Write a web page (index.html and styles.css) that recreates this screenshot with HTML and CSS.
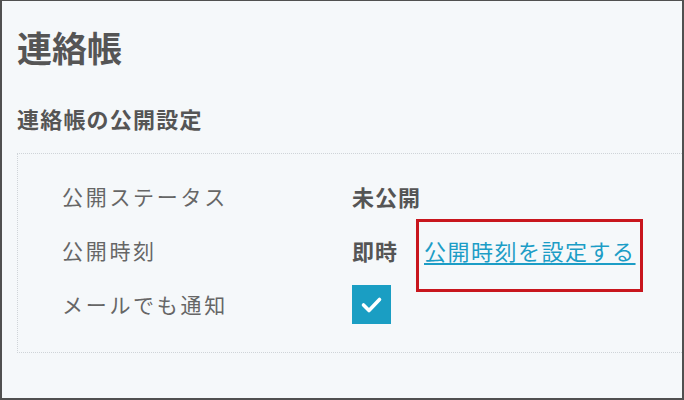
FILE: index.html
```html
<!DOCTYPE html>
<html lang="ja">
<head>
  <meta charset="UTF-8">
  <meta name="viewport" content="width=device-width, initial-scale=1.0">
  <title>連絡帳</title>
  <link rel="stylesheet" href="styles.css">
</head>
<body>
  <div class="frame">
    <h1 class="page-title">連絡帳</h1>
    <h2 class="section-title">連絡帳の公開設定</h2>
    <div class="settings-panel">
      <div class="setting-row">
        <div class="setting-label">公開ステータス</div>
        <div class="setting-value">未公開</div>
      </div>
      <div class="setting-row">
        <div class="setting-label">公開時刻</div>
        <div class="setting-value">
          即時
          <a href="#" class="time-link">公開時刻を設定する</a>
        </div>
      </div>
      <div class="setting-row">
        <div class="setting-label">メールでも通知</div>
        <div class="setting-value">
          <span class="checkbox">
            <svg viewBox="0 0 39 39" width="39" height="39">
              <polyline points="11.5,20 17,25.5 27.5,14.5" fill="none" stroke="#fff" stroke-width="3.6" stroke-linecap="round" stroke-linejoin="round"/>
            </svg>
          </span>
        </div>
      </div>
    </div>
  </div>
</body>
</html>
```

FILE: styles.css
```css
html, body {
  margin: 0;
  padding: 0;
}
body {
  font-family: "Noto Sans CJK JP", "Noto Sans", sans-serif;
  background: #f5f8fa;
}
.frame {
  box-sizing: border-box;
  width: 684px;
  height: 400px;
  border: 2px solid #505050;
  border-top-width: 1px;
  background: #f5f8fa;
  padding: 0 0 0 15px;
  overflow: hidden;
}
.page-title {
  margin: 26px 0 0;
  font-size: 35px;
  line-height: 40px;
  font-weight: bold;
  color: #555;
}
.section-title {
  margin: 36px 0 0;
  font-size: 22px;
  line-height: 30px;
  letter-spacing: 1.2px;
  font-weight: bold;
  color: #555;
}
.settings-panel {
  margin: 20px -40px 0 0;
  border: 1px dotted #cfd4d8;
  padding: 15px 0 21px 44px;
}
.setting-row {
  display: grid;
  grid-template-columns: 290px auto;
  align-items: center;
  height: 54px;
}
.setting-label {
  font-size: 21px;
  letter-spacing: 2.7px;
  color: #666;
}
.setting-value {
  display: flex;
  align-items: center;
  font-size: 22px;
  font-weight: bold;
  color: #555;
  letter-spacing: 1px;
}
.time-link {
  position: relative;
  margin-left: 26px;
  font-weight: normal;
  letter-spacing: 1.5px;
  color: #1c9dc6;
  text-decoration: underline;
  text-underline-offset: 3px;
}
.time-link::after {
  content: "";
  position: absolute;
  left: -8px;
  right: -7px;
  top: -15px;
  bottom: -26px;
  border: 3px solid #c8161d;
}
.checkbox {
  display: inline-block;
  width: 39px;
  height: 39px;
  background: #1a9ec3;
}
.checkbox svg {
  display: block;
}
```
